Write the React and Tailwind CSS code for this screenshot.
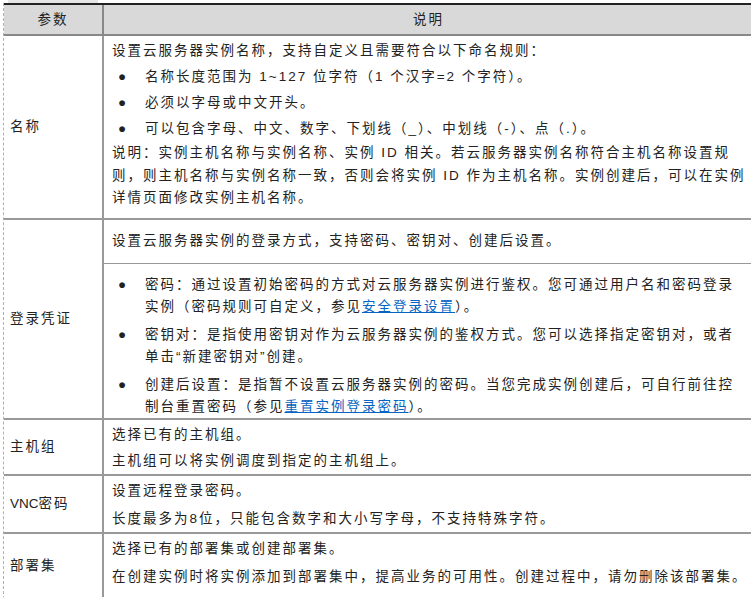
export default function App(){
const F={fontFamily:'"Liberation Sans","Noto Sans CJK SC",sans-serif'};
const Li=({children})=>(<div className="flex"><span className="w-[33px] shrink-0 pl-[6px] tracking-normal">●</span><div>{children}</div></div>);
const A=({children})=>(<a className="text-[#0563c1] underline">{children}</a>);
return(<div style={F} className="w-[751px] h-[597px] overflow-hidden bg-white text-[13.5px] tracking-[2px] text-[#222] leading-[22px]">
<div className="h-[3px] w-[90px] ml-[8px] bg-[#e6e6e6]"></div>
<div className="ml-[3px] border-l border-dashed border-[#b0b0b0] w-[760px]">
<div className="flex h-[33px] bg-[#d9d9d9] border-t-2 border-t-[#222] border-b-2 border-b-[#888]">
<div className="w-[98px] flex items-center justify-center">参数</div>
<div className="flex-1 border-l-2 border-[#888] flex items-center justify-center pr-[10px]">说明</div></div>
<div className="flex h-[184px] border-b-2 border-[#999]">
<div className="w-[98px] flex items-center pl-[6px]">名称</div>
<div className="w-[650px] border-l-2 border-[#999] pl-[8px] pr-[4px] pt-[4px]">
<p className="mb-[4px]">设置云服务器实例名称，支持自定义且需要符合以下命名规则：</p>
<div className="space-y-[4px]"><Li>名称长度范围为 1~127 位字符（1 个汉字=2 个字符）。</Li><Li>必须以字母或中文开头。</Li><Li>可以包含字母、中文、数字、下划线（_）、中划线（-）、点（.）。</Li></div>
<p className="mt-[2px] leading-[22.5px]">说明：实例主机名称与实例名称、实例 ID 相关。若云服务器实例名称符合主机名称设置规则，则主机名称与实例名称一致，否则会将实例 ID 作为主机名称。实例创建后，可以在实例详情页面修改实例主机名称。</p></div></div>
<div className="flex h-[200px] border-b-2 border-[#999]">
<div className="w-[98px] flex items-center pl-[6px]">登录凭证</div>
<div className="w-[650px] border-l-2 border-[#999] flex flex-col">
<div className="h-[47px] border-b border-[#999] pl-[8px] pt-[10px]">设置云服务器实例的登录方式，支持密码、密钥对、创建后设置。</div>
<div className="pl-[8px] pr-[4px] pt-[10px] space-y-[6px]">
<Li>密码：通过设置初始密码的方式对云服务器实例进行鉴权。您可通过用户名和密码登录实例（密码规则可自定义，参见<A>安全登录设置</A>）。</Li>
<Li>密钥对：是指使用密钥对作为云服务器实例的鉴权方式。您可以选择指定密钥对，或者单击“新建密钥对”创建。</Li>
<Li>创建后设置：是指暂不设置云服务器实例的密码。当您完成实例创建后，可自行前往控制台重置密码（参见<A>重置实例登录密码</A>）。</Li></div></div></div>
<div className="flex h-[56px] border-b-2 border-[#999]">
<div className="w-[98px] flex items-center pl-[6px]">主机组</div>
<div className="flex-1 border-l-2 border-[#999] pl-[8px] pt-[4px] space-y-[4px]"><p>选择已有的主机组。</p><p>主机组可以将实例调度到指定的主机组上。</p></div></div>
<div className="flex h-[58px] border-b-2 border-[#999]">
<div className="w-[98px] flex items-center pl-[6px] tracking-normal">VNC<span className="tracking-[2px]">密码</span></div>
<div className="flex-1 border-l-2 border-[#999] pl-[8px] pt-[4px] space-y-[6px]"><p>设置远程登录密码。</p><p>长度最多为8位，只能包含数字和大小写字母，不支持特殊字符。</p></div></div>
<div className="flex h-[70px]">
<div className="w-[98px] flex items-center pl-[6px] pb-[6px]">部署集</div>
<div className="flex-1 border-l-2 border-[#999] pl-[8px] pt-[4px] space-y-[6px]"><p>选择已有的部署集或创建部署集。</p><p className="whitespace-nowrap">在创建实例时将实例添加到部署集中，提高业务的可用性。创建过程中，请勿删除该部署集。</p></div></div>
</div></div>);}
